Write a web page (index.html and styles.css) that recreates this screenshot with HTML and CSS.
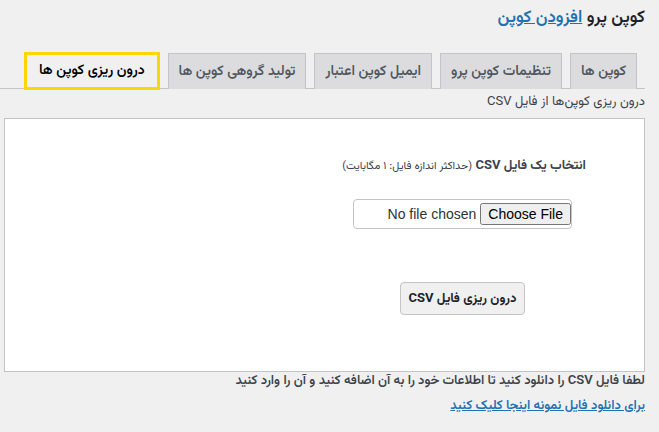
FILE: index.html
```html
<!DOCTYPE html>
<html lang="fa" dir="rtl">
<head>
<meta charset="utf-8">
<link rel="stylesheet" href="styles.css">
</head>
<body>
<div class="wrap">
  <h1 class="title">کوپن پرو <a href="#" class="title-link">افزودن کوپن</a></h1>
  <nav class="tabs">
    <a href="#" class="tab">کوپن ها</a>
    <a href="#" class="tab">تنظیمات کوپن پرو</a>
    <a href="#" class="tab">ایمیل کوپن اعتبار</a>
    <a href="#" class="tab">تولید گروهی کوپن ها</a>
    <a href="#" class="tab tab-active">درون ریزی کوپن ها</a>
  </nav>
  <p class="subtitle">درون ریزی کوپن‌ها از فایل CSV</p>
  <div class="box">
    <div class="field-label"><b>انتخاب یک فایل CSV</b> <span class="small">(حداکثر اندازه فایل: ۱ مگابایت)</span></div>
    <div class="file-wrap"><input type="file" class="file-input"></div>
    <div class="btn-row"><button class="btn">درون ریزی فایل CSV</button></div>
  </div>
  <p class="note">لطفا فایل CSV را دانلود کنید تا اطلاعات خود را به آن اضافه کنید و آن را وارد کنید</p>
  <p class="sample"><a href="#" class="sample-link">برای دانلود فایل نمونه اینجا کلیک کنید</a></p>
</div>
</body>
</html>
```
FILE: styles.css
```css
* { box-sizing: border-box; }
html, body { margin: 0; padding: 0; }
body {
  background: #f0f0f1;
  color: #1d2327;
  font-family: "Vazirmatn", "Noto Sans Arabic", "DejaVu Sans", "Liberation Sans", sans-serif;
  font-size: 13px;
  width: 659px;
  height: 432px;
  overflow: hidden;
}
.wrap {
  padding: 0 14px 0 0;
}
.title {
  margin: 0;
  padding: 6px 0 0 0;
  font-size: 17px;
  font-weight: 600;
  line-height: 24px;
  height: 51px;
  color: #1d2327;
}
.title-link {
  color: #2271b1;
  font-weight: 600;
}
.tabs {
  display: flex;
  gap: 8px;
  padding-right: 8px;
  border-bottom: 1px solid #c3c4c7;
  height: 38px;
  align-items: flex-end;
}
.tab {
  display: flex;
  align-items: center;
  justify-content: center;
  height: 36px;
  padding: 0 10px;
  background: #dcdcde;
  border: 1px solid #c3c4c7;
  border-bottom: none;
  color: #50575e;
  font-size: 14px;
  font-weight: 600;
  text-decoration: none;
  white-space: nowrap;
  margin-bottom: -1px;
}
.tab-active {
  background: #f0f0f1;
  color: #000;
  border: 3px solid #ffd700;
  height: 38px;
  margin-bottom: -2px;
  padding: 0 12px;
}
.subtitle {
  margin: 3px 0 0 0;
  font-size: 13px;
  line-height: 20px;
  color: #3c434a;
}
.box {
  margin: 6px 0 0 0;
  margin-left: 4px;
  background: #fff;
  border: 1px solid #c3c4c7;
  height: 254px;
  padding: 38px 58px 0 0;
}
.field-label {
  font-size: 13px;
  line-height: 18px;
  color: #3c434a;
}
.field-label b { font-weight: 700; }
.small { font-size: 11px; }
.file-wrap {
  margin: 23px 14px 0 0;
  width: 219px;
  height: 30px;
  border: 1px solid #c3c4c7;
  border-radius: 4px;
  display: flex;
  align-items: center;
  padding: 0;
}
.file-input {
  font-family: "Liberation Sans", Arial, sans-serif;
  font-size: 14px;
  color: #2c3338;
  width: 216px;
}
.btn-row {
  padding-right: 61px;
  margin-top: 53px;
}
.btn {
  width: 125px;
  height: 33px;
  padding: 0;
  white-space: nowrap;
  font-family: inherit;
  font-size: 13px;
  font-weight: 700;
  color: #1d2327;
  background: #f0f0f1;
  border: 1px solid #c3c4c7;
  border-radius: 4px;
}
.note {
  margin: -1px 0 0 0;
  font-size: 13px;
  font-weight: 600;
  line-height: 20px;
  color: #3c434a;
}
.sample {
  margin: 5px 0 0 0;
  font-size: 13px;
  line-height: 20px;
}
.sample-link {
  color: #2271b1;
  font-weight: 600;
}
```
